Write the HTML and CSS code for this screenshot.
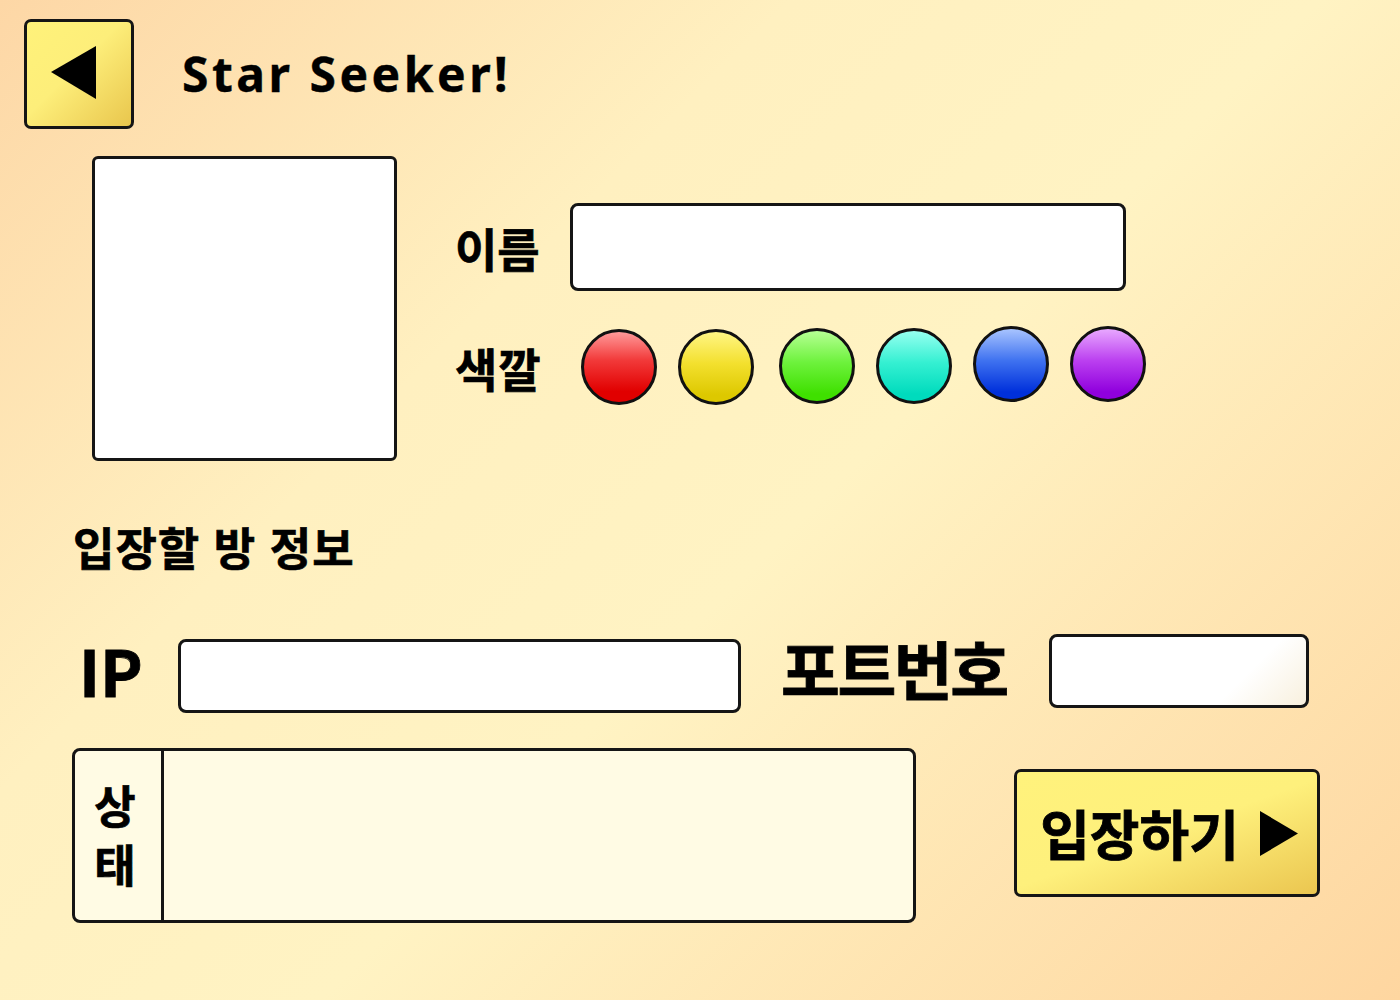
FILE: index.html
```html
<!DOCTYPE html>
<html lang="ko">
<head>
<meta charset="utf-8">
<title>Star Seeker!</title>
<link rel="stylesheet" href="styles.css">
</head>
<body>
<div class="page">
  <header class="top">
    <button class="back-btn" type="button" aria-label="back">
      <svg width="104" height="104" viewBox="0 0 104 104"><polygon points="24,50 69,24 69,77" fill="#000"/></svg>
    </button>
    <h1 class="title">Star Seeker!</h1>
  </header>

  <section class="profile">
    <div class="avatar"></div>
    <div class="profile-fields">
      <div class="name-row">
        <span class="label name-label">이름</span>
        <input class="name-input" type="text">
      </div>
      <div class="color-row">
        <span class="label color-label">색깔</span>
        <div class="swatches">
          <span class="swatch red"></span>
          <span class="swatch yellow"></span>
          <span class="swatch green"></span>
          <span class="swatch cyan"></span>
          <span class="swatch blue"></span>
          <span class="swatch purple"></span>
        </div>
      </div>
    </div>
  </section>

  <h2 class="section-title">입장할 방 정보</h2>

  <div class="addr-row">
    <span class="big-label ip-label">IP</span>
    <input class="ip-input" type="text">
    <span class="big-label port-label">포트번호</span>
    <input class="port-input" type="text">
  </div>

  <div class="bottom-row">
    <div class="status">
      <div class="status-label"><span class="status-text">상태</span></div>
      <div class="status-body"></div>
    </div>
    <button class="enter-btn" type="button">
      <span>입장하기</span>
      <svg width="38" height="45" viewBox="0 0 38 45"><polygon points="0,0 38,22.5 0,45" fill="#000"/></svg>
    </button>
  </div>
</div>
</body>
</html>
```

FILE: styles.css
```css
* { box-sizing: border-box; }
html, body { margin: 0; padding: 0; }
body {
  width: 1400px;
  height: 1000px;
  overflow: hidden;
  font-family: "Noto Sans CJK KR", "Noto Sans", sans-serif;
  color: #000;
  background: linear-gradient(135deg, #fdd7a6 0%, #fff0c0 33%, #fff3c3 55%, #fed6a0 100%);
}
.page {
  width: 1400px;
  height: 1000px;
  display: flex;
  flex-direction: column;
}
.top {
  display: flex;
  align-items: center;
  padding: 19px 0 0 24px;
}
.back-btn {
  width: 110px;
  height: 110px;
  padding: 0;
  border: 3px solid #151515;
  border-radius: 7px;
  background: linear-gradient(135deg, #fff27a 0%, #fdee7a 45%, #e9c64d 100%);
  display: flex;
  align-items: center;
  justify-content: center;
}
.back-btn svg { display: block; }
.title {
  margin: 0 0 0 48px;
  font-family: "Noto Sans", "DejaVu Sans", sans-serif;
  font-weight: 700;
  font-size: 48px;
  letter-spacing: 3.5px;
  line-height: 1;
  -webkit-text-stroke: 0.4px #000;
}
.profile {
  display: flex;
  margin: 27px 0 0 92px;
}
.avatar {
  width: 305px;
  height: 305px;
  background: #fff;
  border: 3px solid #151515;
  border-radius: 6px;
}
.profile-fields {
  margin-left: 58px;
  padding-top: 47px;
  display: flex;
  flex-direction: column;
}
.label {
  font-weight: 700;
  font-size: 46px;
  line-height: 1;
  -webkit-text-stroke: 0.7px #000;
}
.name-row {
  display: flex;
  align-items: center;
}
.name-label { width: 115px; }
.name-input {
  width: 556px;
  height: 88px;
  border: 3px solid #151515;
  border-radius: 8px;
  background: #fff;
}
.color-row {
  display: flex;
  align-items: center;
  margin-top: 36px;
  height: 80px;
}
.color-label { width: 126px; letter-spacing: 1px; }
.swatches {
  display: flex;
  align-items: center;
  gap: 21px;
}
.swatch {
  width: 76px;
  height: 76px;
  border-radius: 50%;
  border: 3px solid #111;
}
.red { background: linear-gradient(180deg, #ff9a9a 0%, #f23a3a 40%, #e10000 85%); }
.yellow { background: linear-gradient(180deg, #fff584 0%, #f3e02e 45%, #ddc800 90%); }
.green { margin-left: 4px; background: linear-gradient(180deg, #b6ff94 0%, #6df23c 45%, #3fe000 90%); transform: translateY(-1px); }
.cyan { background: linear-gradient(180deg, #96fff0 0%, #35f0d2 45%, #00dbbd 90%); transform: translateY(-1px); }
.blue { background: linear-gradient(180deg, #a8c4ff 0%, #3f72f0 45%, #0030db 90%); transform: translateY(-3px); }
.purple { background: linear-gradient(180deg, #e8a8ff 0%, #bb40f0 45%, #9000dd 90%); transform: translateY(-3px); }

.section-title {
  margin: 58px 0 0 73px;
  font-weight: 700;
  font-size: 45px;
  line-height: 56px;
  letter-spacing: 1px;
  -webkit-text-stroke: 0.7px #000;
}
.addr-row {
  display: flex;
  align-items: flex-start;
  margin-top: 59px;
  padding-left: 79px;
  height: 79px;
}
.big-label {
  font-weight: 700;
  font-size: 64px;
  line-height: 70px;
  -webkit-text-stroke: 0.8px #000;
}
.ip-label { width: 99px; }
.ip-input {
  margin-top: 5px;
  width: 563px;
  height: 74px;
  border: 3px solid #151515;
  border-radius: 8px;
  background: #fff;
}
.port-label { margin-left: 40px; width: 268px; letter-spacing: -2.5px; line-height: 66px; }
.port-input {
  width: 260px;
  height: 74px;
  border: 3px solid #151515;
  border-radius: 8px;
  background: linear-gradient(135deg, #fff 72%, #f8f0de 100%);
}
.bottom-row {
  display: flex;
  align-items: flex-start;
  margin-top: 35px;
  padding-left: 72px;
}
.status {
  width: 844px;
  height: 175px;
  display: flex;
  border: 3px solid #151515;
  border-radius: 8px;
  background: #fffbe4;
  overflow: hidden;
}
.status-label {
  width: 89px;
  border-right: 3px solid #151515;
  display: flex;
  align-items: center;
  justify-content: center;
  padding-right: 6px;
}
.status-text {
  writing-mode: vertical-rl;
  text-orientation: upright;
  font-weight: 700;
  font-size: 45px;
  line-height: 1;
  letter-spacing: 14px;
  margin-bottom: -14px;
  -webkit-text-stroke: 0.7px #000;
}
.status-body { flex: 1; }
.enter-btn {
  margin: 21px 0 0 98px;
  width: 306px;
  height: 128px;
  border: 3px solid #151515;
  border-radius: 7px;
  background: linear-gradient(160deg, #fff27c 0%, #fef07c 50%, #ebc650 100%);
  display: flex;
  align-items: center;
  justify-content: center;
  gap: 21px;
  padding: 0 0 0 4px;
  font-family: "Noto Sans CJK KR", "Noto Sans", sans-serif;
  font-weight: 700;
  font-size: 54px;
  color: #000;
}
.enter-btn span { line-height: 1; -webkit-text-stroke: 0.8px #000; }
.enter-btn svg { display: block; }
```
